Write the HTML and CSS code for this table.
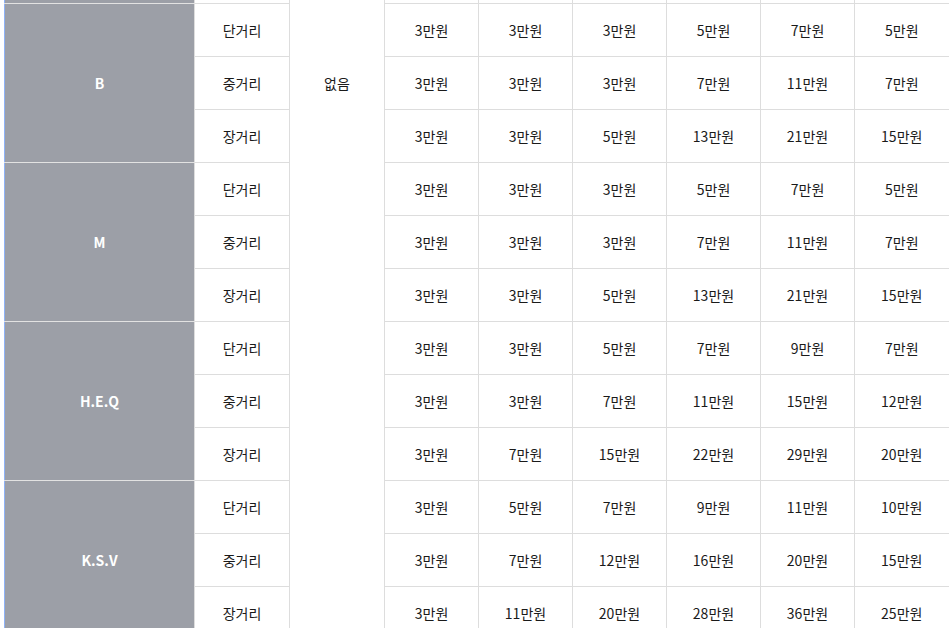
FILE: index.html
```html
<!DOCTYPE html>
<html lang="ko">
<head>
    <meta charset="UTF-8">
    <meta name="viewport" content="width=device-width, initial-scale=1.0">
    <title>요금표</title>
    <link rel="stylesheet" href="styles.css">
</head>
<body>
    <div class="table-wrap">
        <table class="fee-table">
            <colgroup>
                <col class="col-group">
                <col class="col-range">
                <col class="col-extra">
                <col class="col-price"><col class="col-price"><col class="col-price">
                <col class="col-price"><col class="col-price"><col class="col-price">
            </colgroup>
            <tbody>
                <!-- previous group, scrolled out of view -->
                <tr>
                    <th rowspan="3" class="group-cell"></th>
                    <td></td>
                    <td rowspan="15" class="extra-cell">없음</td>
                    <td></td><td></td><td></td><td></td><td></td><td></td>
                </tr>
                <tr>
                    <td></td>
                    <td></td><td></td><td></td><td></td><td></td><td></td>
                </tr>
                <tr>
                    <td></td>
                    <td></td><td></td><td></td><td></td><td></td><td></td>
                </tr>

                <tr>
                    <th rowspan="3" class="group-cell">B</th>
                    <td>단거리</td>
                    <td>3만원</td><td>3만원</td><td>3만원</td><td>5만원</td><td>7만원</td><td>5만원</td>
                </tr>
                <tr>
                    <td>중거리</td>
                    <td>3만원</td><td>3만원</td><td>3만원</td><td>7만원</td><td>11만원</td><td>7만원</td>
                </tr>
                <tr>
                    <td>장거리</td>
                    <td>3만원</td><td>3만원</td><td>5만원</td><td>13만원</td><td>21만원</td><td>15만원</td>
                </tr>

                <tr>
                    <th rowspan="3" class="group-cell">M</th>
                    <td>단거리</td>
                    <td>3만원</td><td>3만원</td><td>3만원</td><td>5만원</td><td>7만원</td><td>5만원</td>
                </tr>
                <tr>
                    <td>중거리</td>
                    <td>3만원</td><td>3만원</td><td>3만원</td><td>7만원</td><td>11만원</td><td>7만원</td>
                </tr>
                <tr>
                    <td>장거리</td>
                    <td>3만원</td><td>3만원</td><td>5만원</td><td>13만원</td><td>21만원</td><td>15만원</td>
                </tr>

                <tr>
                    <th rowspan="3" class="group-cell">H.E.Q</th>
                    <td>단거리</td>
                    <td>3만원</td><td>3만원</td><td>5만원</td><td>7만원</td><td>9만원</td><td>7만원</td>
                </tr>
                <tr>
                    <td>중거리</td>
                    <td>3만원</td><td>3만원</td><td>7만원</td><td>11만원</td><td>15만원</td><td>12만원</td>
                </tr>
                <tr>
                    <td>장거리</td>
                    <td>3만원</td><td>7만원</td><td>15만원</td><td>22만원</td><td>29만원</td><td>20만원</td>
                </tr>

                <tr>
                    <th rowspan="3" class="group-cell">K.S.V</th>
                    <td>단거리</td>
                    <td>3만원</td><td>5만원</td><td>7만원</td><td>9만원</td><td>11만원</td><td>10만원</td>
                </tr>
                <tr>
                    <td>중거리</td>
                    <td>3만원</td><td>7만원</td><td>12만원</td><td>16만원</td><td>20만원</td><td>15만원</td>
                </tr>
                <tr>
                    <td>장거리</td>
                    <td>3만원</td><td>11만원</td><td>20만원</td><td>28만원</td><td>36만원</td><td>25만원</td>
                </tr>
            </tbody>
        </table>
    </div>
</body>
</html>
```

FILE: styles.css
```css
* {
    margin: 0;
    padding: 0;
    box-sizing: border-box;
}

html,
body {
    height: 100%;
    overflow: hidden;
}

body {
    background-color: #ffffff;
    font-family: "Noto Sans CJK KR", "Noto Sans", sans-serif;
    color: #1a1a1a;
}

/* the page is scrolled: the first group sits above the window */
.table-wrap {
    padding-left: 4px;
    height: 100%;
    overflow: hidden;
}

.fee-table {
    margin-top: -156px;
    border-collapse: collapse;
    table-layout: fixed;
    width: 944px;
    font-size: 14px;
}

.col-group {
    width: 190px;
}

.col-range,
.col-extra {
    width: 95px;
}

.col-price {
    width: 94px;
}

.fee-table td,
.fee-table th {
    height: 53px;
    border: 1px solid #dddddd;
    text-align: center;
    vertical-align: middle;
    font-weight: 400;
    line-height: 20px;
}

.fee-table tr td:last-child {
    border-right: none;
}

.group-cell {
    background-color: #9c9fa7;
    color: #ffffff;
    font-weight: 700 !important;
    border-left: 1px solid #8fb2f6 !important;
    border-top-color: #e2e2e2 !important;
    border-bottom-color: #e2e2e2 !important;
}

.fee-table .extra-cell {
    background-color: #ffffff;
    vertical-align: top;
    padding-top: 228px;
}
```
